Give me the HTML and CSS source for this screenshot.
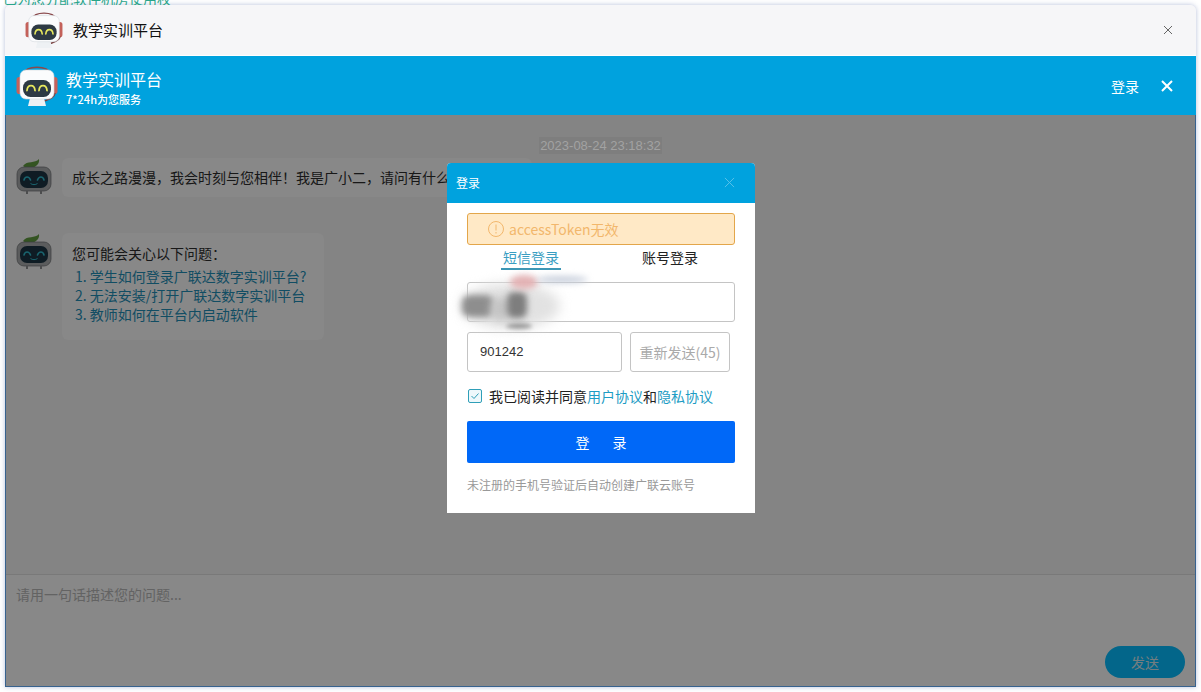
FILE: index.html
```html
<!DOCTYPE html>
<html lang="zh-CN">
<head>
<meta charset="utf-8">
<title>教学实训平台</title>
<link rel="stylesheet" href="styles.css">
</head>
<body>
<svg class="defs" width="0" height="0" aria-hidden="true">
  <symbol id="robot" viewBox="0 0 42 40">
    <path d="M7 8C11 -1 31 -1 35 8" fill="none" stroke="#8a4a4c" stroke-width="1.400"/>
    <rect x="0.500" y="11" width="6" height="17" rx="2.800" fill="#c4615a"/>
    <rect x="35.500" y="11" width="6" height="17" rx="2.800" fill="#c4615a"/>
    <path d="M39 27C38 32 33 33 28 35" fill="none" stroke="#7a4040" stroke-width="1.600"/>
    <path d="M14 32h14l2 8H12z" fill="#eef1f4"/>
    <rect x="4" y="4" width="34" height="29" rx="6" fill="#fbfcfd" stroke="#d0d6dc" stroke-width=".6"/>
    <rect x="7" y="14" width="28" height="17" rx="7.500" fill="#2d3a44"/>
    <path d="M11 24.500C11.500 18 18.500 18 19 24.500M23 24.500C23.500 18 30.500 18 31 24.500" fill="none" stroke="#e6e85e" stroke-width="1.800" stroke-linecap="round"/>
  </symbol>
  <symbol id="bot" viewBox="0 0 36 38">
    <path d="M7 8C11 2 19 6 23 1C24 7 18 11 10 10z" fill="#5f9a3f"/>
    <rect x="1" y="9" width="34" height="24" rx="7" fill="#a6a8aa" stroke="#6c6e70" stroke-width=".7"/>
    <rect x="4" y="13" width="28" height="17" rx="7" fill="#1c3442"/>
    <path d="M8 22C9 18 13 18 14.500 22M21.500 22C23 18 27 18 28 22" fill="none" stroke="#2fb6c8" stroke-width="1.600" stroke-linecap="round"/>
    <path d="M14.500 25.500C16.500 27 19.500 27 21.500 25.500" fill="none" stroke="#2fb6c8" stroke-width="1"/>
    <path d="M10 33h2v3h-2zM24 33h2v3h-2z" fill="#8a8c8e"/>
  </symbol>
</svg>

<div class="clipped-note"><span>已为您分配软件机房使用权</span></div>

<main class="window">
  <header class="titlebar">
    <svg class="titlebar-logo"><use href="#robot"/></svg>
    <span class="titlebar-name">教学实训平台</span>
    <svg class="titlebar-close" viewBox="0 0 10 10"><path d="M1 1l8 8M9 1l-8 8"/></svg>
  </header>

  <section class="banner">
    <svg class="banner-logo"><use href="#robot"/></svg>
    <div class="banner-text">
      <div class="banner-name">教学实训平台</div>
      <div class="banner-sub">7*24h为您服务</div>
    </div>
    <span class="banner-login">登录</span>
    <svg class="banner-close" viewBox="0 0 12 12"><path d="M1 1l10 10M11 1L1 11"/></svg>
  </section>

  <div class="lower">
    <section class="chat">
      <div class="stamp-row"><time class="stamp">2023-08-24 23:18:32</time></div>
      <div class="msg msg-first">
        <svg class="msg-avatar"><use href="#bot"/></svg>
        <div class="bubble bubble-wide">成长之路漫漫，我会时刻与您相伴！我是广小二，请问有什么可以帮您？</div>
      </div>
      <div class="msg msg-second">
        <svg class="msg-avatar"><use href="#bot"/></svg>
        <div class="bubble bubble-list">
          <div class="list-title">您可能会关心以下问题：</div>
          <div class="faq">1. 学生如何登录广联达数字实训平台?</div>
          <div class="faq">2. 无法安装/打开广联达数字实训平台</div>
          <div class="faq">3. 教师如何在平台内启动软件</div>
        </div>
      </div>
    </section>

    <section class="composer">
      <div class="placeholder">请用一句话描述您的问题...</div>
      <div class="composer-actions"><button class="send">发送</button></div>
    </section>

    <div class="overlay">
      <div class="modal">
        <div class="modal-head">
          <span>登录</span>
          <svg class="modal-close" viewBox="0 0 12 12"><path d="M1 1l10 10M11 1L1 11"/></svg>
        </div>
        <div class="modal-body">
          <div class="alert">
            <svg class="alert-icon" viewBox="0 0 16 16"><circle cx="8" cy="8" r="7.500"/><path d="M8 3.500v6M8 11v1.500"/></svg>
            <span>accessToken无效</span>
          </div>
          <div class="tabs">
            <span class="tab tab-active">短信登录</span>
            <span class="tab">账号登录</span>
          </div>
          <div class="field field-phone">
            <i class="smear smear-light"></i><i class="smear smear-a"></i><i class="smear smear-m"></i><i class="smear smear-b"></i><i class="smear smear-c"></i><i class="smear smear-d"></i><i class="smear smear-e"></i>
          </div>
          <div class="code-row">
            <div class="field field-code">901242</div>
            <div class="resend">重新发送(45)</div>
          </div>
          <label class="agree">
            <svg class="check" viewBox="0 0 14 14"><rect x=".5" y=".5" width="13" height="13" rx="1.500"/><path d="M3.500 7l2.500 2.500 4.500-5"/></svg>
            <span>我已阅读并同意<a class="link">用户协议</a>和<a class="link">隐私协议</a></span>
          </label>
          <button class="submit">登 录</button>
          <p class="hint">未注册的手机号验证后自动创建广联云账号</p>
        </div>
      </div>
    </div>
  </div>
</main>
</body>
</html>
```

FILE: styles.css
```css
* { box-sizing: border-box; }
html, body { margin: 0; height: 100%; }
body {
  background: #fff;
  font-family: "Noto Sans CJK SC", "Liberation Sans", sans-serif;
  font-size: 14px;
  overflow: hidden;
}
.defs { position: absolute; }

.clipped-note {
  height: 5px;
  overflow: hidden;
  padding-left: 3px;
  color: #2aa58a;
  font-size: 14px;
  line-height: 14px;
}
.clipped-note span { display: block; margin-top: -9px; }

.window {
  width: 1191px;
  height: 682px;
  margin-left: 5px;
  display: flex;
  flex-direction: column;
  border-radius: 6px 6px 0 0;
  box-shadow: 0 0 5px rgba(90, 110, 170, .45);
  overflow: hidden;
  background: #f6f6f8;
}

.titlebar {
  height: 51px;
  flex: none;
  display: flex;
  align-items: center;
  background: #f6f6f8;
  border-bottom: 1px solid #fff;
  padding: 0 23px 1px 20px;
}
.titlebar-logo { width: 38px; height: 36px; flex: none; }
.titlebar-name { margin-left: 10px; font-size: 15px; color: #111; flex: 1; }
.titlebar-close { width: 10px; height: 10px; fill: none; stroke: #666; stroke-width: 1; }

.banner {
  height: 59px;
  flex: none;
  display: flex;
  align-items: center;
  background: #00a2de;
  color: #fff;
  padding: 0 23px 0 11px;
}
.banner-logo { width: 42px; height: 40px; flex: none; }
.banner-text { margin-left: 8px; flex: 1; padding-top: 4px; }
.banner-name { font-size: 16px; line-height: 24px; margin-top: -1px; }
.banner-sub { font-size: 11px; line-height: 16px; font-weight: 500; }
.banner-login { font-size: 14px; margin-right: 20px; transform: translateX(-2px); }
.banner-close { width: 12px; height: 12px; fill: none; stroke: #fff; stroke-width: 2; }

.lower {
  position: relative;
  flex: 1;
  display: flex;
  flex-direction: column;
  min-height: 0;
  border-left: 1px solid #37628e;
  border-right: 1px solid #37628e;
  border-bottom: 1px solid #37628e;
}

.chat {
  height: 460px;
  flex: none;
  background: #f0f0f0;
  border-bottom: 1px solid #dcdcdc;
  padding: 22px 10px 0;
}
.stamp-row { display: flex; justify-content: center; height: 17px; }
.stamp {
  position: relative;
  z-index: 2;
  background: #7e7e7e;
  color: #a2a2a2;
  font-size: 13px;
  line-height: 17px;
  font-family: "Liberation Sans", sans-serif;
  width: 123px;
  text-align: center;
  white-space: nowrap;
}
.msg { display: flex; align-items: flex-start; }
.msg-first { margin-top: 4px; }
.msg-second { margin-top: 36px; }
.msg-avatar { width: 36px; height: 38px; flex: none; margin-right: 10px; }
.bubble { background: #f7f7f7; border-radius: 6px; color: #2c2c2c; }
.bubble-wide {
  width: 470px;
  height: 39px;
  line-height: 39px;
  padding-left: 10px;
  white-space: nowrap;
  overflow: hidden;
}
.bubble-list { width: 262px; height: 107px; padding: 10px 10px 0; }
.list-title { line-height: 20px; margin-bottom: 4px; }
.faq { color: #1f8db4; line-height: 19px; padding-left: 3px; white-space: nowrap; }

.composer {
  flex: 1;
  display: flex;
  flex-direction: column;
  background: #f8f8f8;
  padding: 10px 10px 8px 10px;
}
.placeholder { color: #b4b4b4; line-height: 20px; flex: 1; margin-top: -1px; }
.composer-actions { display: flex; justify-content: flex-end; }
.send {
  width: 80px;
  height: 32px;
  border: 0;
  border-radius: 16px;
  background: #06bbfb;
  color: #d4e4ea;
  font: inherit;
}

.overlay {
  position: absolute;
  inset: 0;
  background: rgba(0, 0, 0, .45);
  display: flex;
  justify-content: center;
  align-items: flex-start;
  padding-top: 48px;
}
.modal { width: 308px; height: 350px; background: #fff; border-radius: 4px 4px 0 0; overflow: hidden; margin-left: 1px; }
.modal-head {
  height: 40px;
  background: #00a2de;
  color: #fff;
  font-size: 12px;
  display: flex;
  align-items: center;
  justify-content: space-between;
  padding: 0 20px 2px 9px;
}
.modal-close { width: 11px; height: 11px; fill: none; stroke: #5cc4ea; stroke-width: 1; }
.modal-body { padding: 10px 20px 0; }

.alert {
  height: 32px;
  background: #ffe9c6;
  border: 1px solid #e3a64a;
  border-radius: 3px;
  color: #f2b76c;
  display: flex;
  align-items: center;
  padding-left: 20px;
  font-size: 14px;
}
.alert-icon { width: 16px; height: 16px; margin-right: 5px; fill: none; stroke: #f2b76c; stroke-width: 1; }

.tabs { display: flex; height: 26px; padding-left: 34px; }
.tab { width: 60px; text-align: center; line-height: 24px; color: #222; height: 25px; flex: none; }
.tab-active { color: #3a9ec2; border-bottom: 2px solid #3d97b5; margin-right: 79px; }

.field {
  border: 1px solid #c4c4c4;
  border-radius: 3px;
  height: 40px;
  background: #fff;
}
.field-phone { position: relative; margin-top: 11px; }
.smear { position: absolute; display: block; border-radius: 50%; }
.smear-light { left: -8px; top: 0; width: 100px; height: 46px; background: #e2e2e2; filter: blur(6px); }
.smear-a { left: -6px; top: 12px; width: 32px; height: 22px; background: #8e8e8e; filter: blur(3px); border-radius: 30%; }
.smear-m { left: 22px; top: 14px; width: 22px; height: 24px; background: #c4c4c4; filter: blur(4px); }
.smear-b { left: 39px; top: 9px; width: 20px; height: 26px; background: #7e7e7e; filter: blur(3px); border-radius: 30%; }
.smear-c { left: 42px; top: -8px; width: 28px; height: 14px; background: #e3b2b4; filter: blur(3px); }
.smear-d { left: 68px; top: -7px; width: 52px; height: 7px; background: #c8cfdc; filter: blur(3px); }
.smear-e { left: 38px; top: 40px; width: 26px; height: 6px; background: #9a9a9a; filter: blur(2px); }

.code-row { display: flex; margin-top: 10px; gap: 8px; }
.field-code { width: 155px; padding-left: 12px; line-height: 38px; font-size: 13px; color: #333; font-family: "Liberation Sans", sans-serif; }
.resend {
  width: 100px;
  height: 40px;
  border: 1px solid #c4c4c4;
  border-radius: 3px;
  color: #aaa;
  text-align: center;
  line-height: 38px;
  white-space: nowrap;
}

.agree { display: flex; align-items: center; margin-top: 14px; height: 20px; color: #222; }
.check { width: 14px; height: 14px; margin: 0 7px 0 1px; fill: #eef8fb; stroke: #2f9fb8; stroke-width: 1; flex: none; }
.check path { fill: none; }
.link { color: #1d9cc4; }

.submit {
  display: block;
  width: 268px;
  height: 42px;
  margin-top: 15px;
  border: 0;
  border-radius: 2px;
  background: #0068f8;
  color: #fff;
  font: inherit;
  word-spacing: 20px;
}
.hint { margin: 14px 0 0; font-size: 12px; line-height: 16px; color: #999; white-space: nowrap; }
```
